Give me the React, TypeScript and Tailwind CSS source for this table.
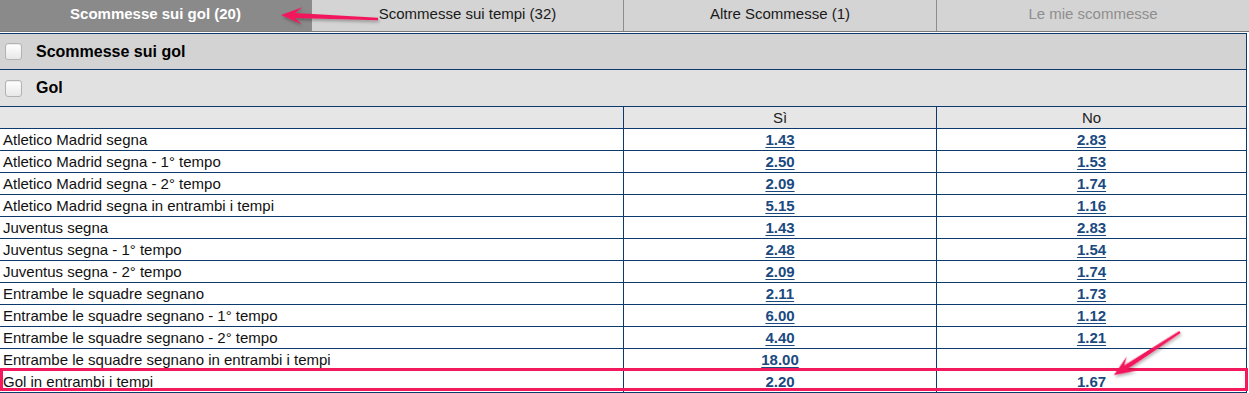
import React from 'react';

const tabs = [
  { label: 'Scommesse sui gol (20)', active: true },
  { label: 'Scommesse sui tempi (32)' },
  { label: 'Altre Scommesse (1)' },
  { label: 'Le mie scommesse', disabled: true },
];

const rows: [string, string, string][] = [
  ['Atletico Madrid segna', '1.43', '2.83'],
  ['Atletico Madrid segna - 1° tempo', '2.50', '1.53'],
  ['Atletico Madrid segna - 2° tempo', '2.09', '1.74'],
  ['Atletico Madrid segna in entrambi i tempi', '5.15', '1.16'],
  ['Juventus segna', '1.43', '2.83'],
  ['Juventus segna - 1° tempo', '2.48', '1.54'],
  ['Juventus segna - 2° tempo', '2.09', '1.74'],
  ['Entrambe le squadre segnano', '2.11', '1.73'],
  ['Entrambe le squadre segnano - 1° tempo', '6.00', '1.12'],
  ['Entrambe le squadre segnano - 2° tempo', '4.40', '1.21'],
  ['Entrambe le squadre segnano in entrambi i tempi', '18.00', ''],
  ['Gol in entrambi i tempi', '2.20', '1.67'],
];

const Checkbox: React.FC = () => (
  <span className="block w-[17px] h-[17px] rounded-[3px] border border-[#b3b3b3] bg-gradient-to-b from-white to-[#e8e8e8] shadow-[inset_0_1px_1px_rgba(0,0,0,0.08)]" />
);

const Arrow: React.FC<{ x: number; y: number; angle: number; len: number }> = ({ x, y, angle, len }) => (
  <g transform={`translate(${x} ${y}) rotate(${angle})`}>
    <polygon
      points={`0,-1.2 ${len - 14},-2.6 ${len - 21},-8.5 ${len},0 ${len - 21},8.5 ${len - 14},2.6 0,1.2`}
      fill="#f2195c"
    />
  </g>
);

const App: React.FC = () => {
  return (
    <div className="relative w-[1249px] h-[393px] overflow-hidden bg-white font-['Liberation_Sans',Arial,sans-serif] text-[15px] text-[#111]">
      {/* Tabs */}
      <div className="grid grid-cols-[311px_312px_313px_1fr] h-[32px] border-b border-[#7a7a7a] bg-[#d4d4d4]">
        {tabs.map((t, i) => (
          <div
            key={t.label}
            className={`flex items-center justify-center pb-[2px] ${i > 0 ? 'border-l border-[#8c8c8c]' : ''} ${
              t.active ? 'bg-[#8a8a8a] text-white font-bold' : t.disabled ? 'text-[#8e8e8e]' : 'text-[#1a1a1a]'
            }`}
          >
            {t.label}
          </div>
        ))}
      </div>

      {/* Table */}
      <div className="mt-[1px] w-[1247px] border-t border-r border-[#0d3a6c]">
        <div className="flex items-center gap-[14px] pl-[5px] h-[36px] bg-[#d3d3d3] border-b border-[#0d3a6c]">
          <Checkbox />
          <span className="font-bold text-[16px] text-black">Scommesse sui gol</span>
        </div>
        <div className="flex items-center gap-[14px] pl-[5px] h-[37px] bg-[#e1e1e1] border-b border-[#0d3a6c]">
          <Checkbox />
          <span className="font-bold text-[16px] text-black">Gol</span>
        </div>

        <div className="grid grid-cols-[623px_313px_1fr] h-[22px] bg-[#e6e6e6] border-b border-[#0d3a6c] leading-[21px]">
          <div />
          <div className="border-l border-[#0d3a6c] text-center text-[#222]">Sì</div>
          <div className="border-l border-[#0d3a6c] text-center text-[#222]">No</div>
        </div>

        {rows.map(([name, si, no], i) => {
          const last = i === rows.length - 1;
          return (
            <div
              key={name}
              className="relative grid grid-cols-[623px_313px_1fr] h-[22px] border-b border-[#0d3a6c] leading-[21px]"
            >
              <div className="pl-[3px]">{name}</div>
              <div className="border-l border-[#0d3a6c] text-center">
                <a className={`font-bold text-[#1b4a80] ${last ? '' : 'underline underline-offset-[2px]'}`}>{si}</a>
              </div>
              <div className="border-l border-[#0d3a6c] text-center">
                {no && (
                  <a className={`font-bold text-[#1b4a80] ${last ? '' : 'underline underline-offset-[2px]'}`}>{no}</a>
                )}
              </div>
              {last && (
                <div className="absolute left-0 -right-[2px] -top-[3px] bottom-[1px] border-[3px] border-[#f2195c] pointer-events-none" />
              )}
            </div>
          );
        })}
      </div>

      {/* Annotation arrows */}
      <svg className="absolute inset-0 pointer-events-none" width="1249" height="393">
        <defs>
          <filter id="sh" x="-20%" y="-50%" width="140%" height="200%">
            <feDropShadow dx="1" dy="2" stdDeviation="1.5" floodColor="#000" floodOpacity="0.3" />
          </filter>
        </defs>
        <g filter="url(#sh)">
          <Arrow x={378} y={19} angle={182.4} len={97} />
          <Arrow x={1180} y={332} angle={146.9} len={79} />
        </g>
      </svg>
    </div>
  );
};

export default App;
